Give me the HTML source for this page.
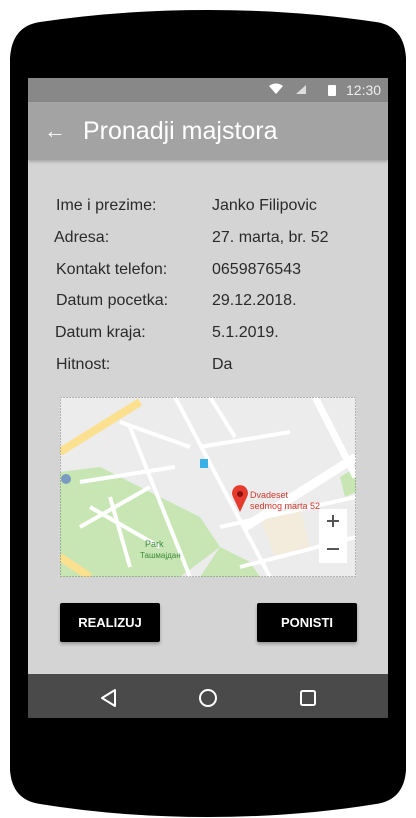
<!DOCTYPE html>
<html><head><meta charset="utf-8"><style>
*{margin:0;padding:0;box-sizing:border-box}
body{width:416px;height:818px;background:#fff;position:relative;overflow:hidden;font-family:"Liberation Sans",Arial,sans-serif}
.abs{position:absolute}
.lbl{position:absolute;font-size:16px;color:#2a2a2a}
.btn{position:absolute;top:603px;width:100px;height:39px;background:#000;color:#fff;font-size:13px;font-weight:bold;display:flex;align-items:center;justify-content:center;border-radius:2px;box-shadow:0 2px 3px rgba(0,0,0,.3)}
</style></head><body>
<svg class="abs" style="left:0;top:0" width="416" height="818">
<path d="M10 58 Q12 26 40 22 Q120 10 208 10 Q296 10 376 22 Q404 26 406 58 L406 770 Q404 800 376 804 Q296 817 208 817 Q120 817 40 804 Q12 800 10 770 Z" fill="#000"/>
</svg>
<div class="abs" style="left:28px;top:78px;width:360px;height:640px;background:#d4d4d4"></div>
<div class="abs" style="left:28px;top:78px;width:360px;height:24px;background:#888"></div>
<svg class="abs" style="left:266px;top:82px" width="80" height="16">
<path d="M3 4 Q10 -1 17 4 L10 12 Z" fill="#fff"/>
<path d="M30 12 L40 3 L40 12 Z" fill="#ddd"/>
<rect x="62" y="3" width="8" height="11" rx="1" fill="#fff"/>
</svg>
<div class="abs" style="left:346px;top:82px;font-size:14px;color:#eee">12:30</div>
<div class="abs" style="left:28px;top:102px;width:360px;height:58px;background:#a3a3a3;box-shadow:0 2px 3px rgba(0,0,0,.2)"></div>
<div class="abs" style="left:44px;top:118px;font-size:22px;color:#fff">←</div>
<div class="abs" style="left:83px;top:117px;font-size:25px;color:#fff">Pronadji majstora</div>
<div class="lbl" style="left:56px;top:197px">Ime i prezime:</div>
<div class="lbl" style="left:212px;top:197px">Janko Filipovic</div>
<div class="lbl" style="left:54px;top:229px">Adresa:</div>
<div class="lbl" style="left:212px;top:229px">27. marta, br. 52</div>
<div class="lbl" style="left:56px;top:261px">Kontakt telefon:</div>
<div class="lbl" style="left:212px;top:261px">0659876543</div>
<div class="lbl" style="left:56px;top:292px">Datum pocetka:</div>
<div class="lbl" style="left:212px;top:292px">29.12.2018.</div>
<div class="lbl" style="left:55px;top:324px">Datum kraja:</div>
<div class="lbl" style="left:212px;top:324px">5.1.2019.</div>
<div class="lbl" style="left:56px;top:356px">Hitnost:</div>
<div class="lbl" style="left:212px;top:356px">Da</div>
<svg class="abs" style="left:60px;top:397px" width="296" height="180" viewBox="0 0 296 180">
<rect width="296" height="180" fill="#ececec"/>
<path d="M0 75 L0 180 L120 180 L160 150 L140 120 L90 95 L40 70 Z" fill="#c8e6b4"/>
<path d="M140 180 L160 150 L190 165 L200 180 Z" fill="#c8e6b4"/>
<path d="M280 80 L296 70 L296 95 L285 100 Z" fill="#c8e6b4"/>
<path d="M200 120 L240 110 L250 150 L215 160 Z" fill="#f3ebdc"/>
<path d="M0 55 L80 5 M0 160 L30 180" stroke="#fbe08f" stroke-width="8"/>
<g stroke="#fff" stroke-width="4" fill="none">
<path d="M115 0 L210 180"/><path d="M150 0 L175 40"/><path d="M60 25 L130 50"/><path d="M70 30 L130 180"/><path d="M140 50 L230 35"/><path d="M20 85 L115 70"/><path d="M20 130 L90 90 M30 110 L100 150 M50 100 L70 170"/>
<path d="M185 130 L296 60" stroke-width="9"/><path d="M255 0 L296 80" stroke-width="7"/><path d="M160 130 L296 100"/><path d="M180 170 L296 140"/>
</g>
<rect x="140" y="62" width="8" height="9" fill="#3ab0e8"/>
<circle cx="6" cy="82" r="5" fill="#7a9bbf"/>
<path d="M180 115 L173 100 A8 8 0 1 1 187 100 Z" fill="#e53b2f"/><circle cx="180" cy="97" r="3" fill="#8b0f0b"/>
<text x="190" y="101" font-size="9" fill="#d23a2f" font-family="Liberation Sans">Dvadeset</text>
<text x="190" y="112" font-size="9" fill="#d23a2f" font-family="Liberation Sans">sedmog marta 52</text>
<text x="85" y="150" font-size="9" fill="#3c8a3c" font-family="Liberation Sans">Park</text>
<text x="80" y="161" font-size="8" fill="#3c8a3c" font-family="Liberation Sans">Ташмајдан</text>
<rect x="259" y="112" width="28" height="54" fill="#fff"/>
<path d="M267 124 H279 M273 118 V130 M267 152 H279" stroke="#555" stroke-width="2"/>
<rect x="0.5" y="0.5" width="295" height="179" fill="none" stroke="#777" stroke-dasharray="1 2"/>
</svg>
<div class="btn" style="left:60px">REALIZUJ</div>
<div class="btn" style="left:257px">PONISTI</div>
<div class="abs" style="left:28px;top:674px;width:360px;height:44px;background:#4a4a4a"></div>
<svg class="abs" style="left:28px;top:674px" width="360" height="44">
<path d="M74 24 L87 16 V32 Z" fill="none" stroke="#fff" stroke-width="2" stroke-linejoin="round"/>
<circle cx="180" cy="24" r="8" fill="none" stroke="#fff" stroke-width="2"/>
<rect x="273" y="17" width="14" height="14" rx="1.5" fill="none" stroke="#fff" stroke-width="2"/>
</svg>
</body></html>
